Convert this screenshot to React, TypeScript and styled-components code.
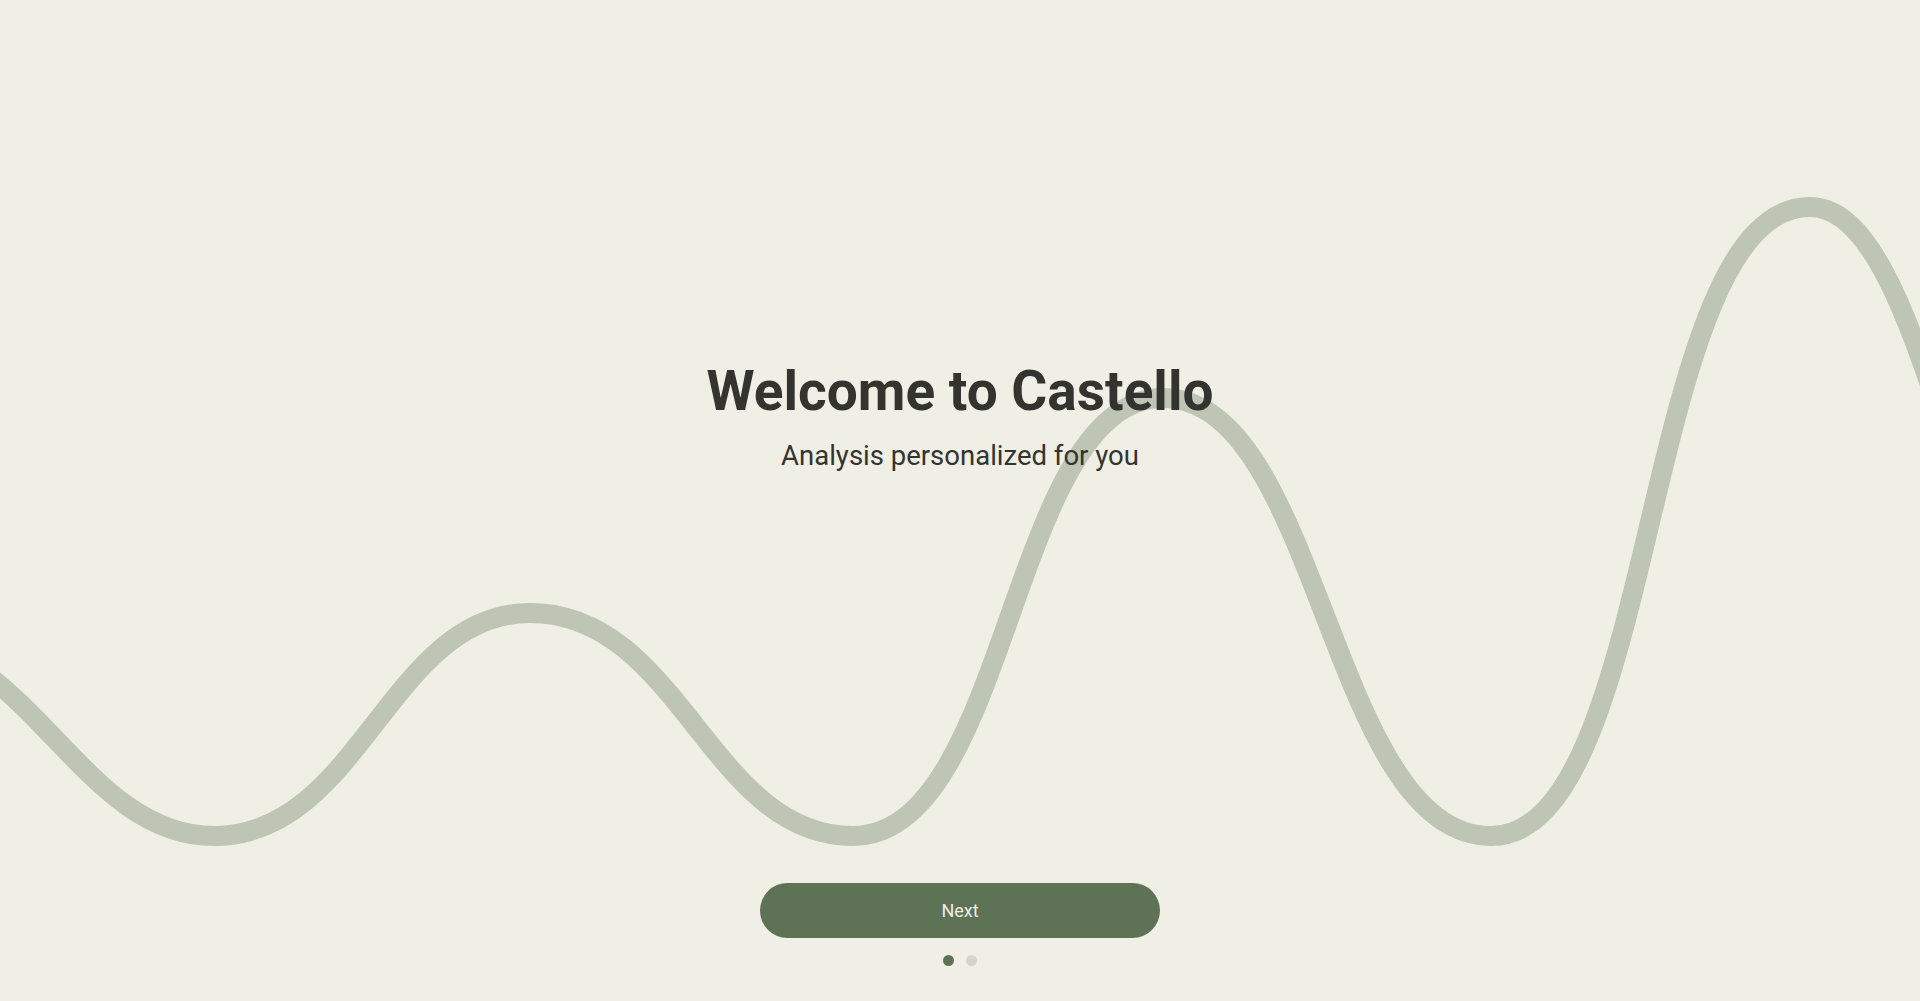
import { useState } from 'react';
import styled, { createGlobalStyle } from 'styled-components';

const slides = [
  { title: 'Welcome to Castello', subtitle: 'Analysis personalized for you' },
  { title: 'Track your progress', subtitle: 'Insights that grow with you' },
];

// centreline of the wave, in page pixels (viewBox matches the 1920x1001 window)
const wavePath = [
  'M -110 640',
  'C 30 640, 80 836, 214 836',
  'C 360 836, 390 613, 530 613',
  'C 680 613, 710 836, 853 836',
  'C 1010 836, 1010 398, 1163 398',
  'C 1320 398, 1330 836, 1491 836',
  'C 1660 836, 1640 207, 1810 207',
  'C 1890 207, 1930 400, 1990 560',
].join(' ');

export default function App() {
  const [step, setStep] = useState(0);
  const slide = slides[step];

  return (
    <>
      <GlobalStyle />
      <Screen>
        <Wave viewBox="0 0 1920 1001" preserveAspectRatio="none" aria-hidden>
          <path d={wavePath} fill="none" stroke="#bec5b4" strokeWidth="20" strokeLinecap="round" />
        </Wave>
        <Hero>
          <Title>{slide.title}</Title>
          <Subtitle>{slide.subtitle}</Subtitle>
        </Hero>
        <Footer>
          <NextButton onClick={() => setStep((s) => (s + 1) % slides.length)}>Next</NextButton>
          <Dots>
            {slides.map((_, i) => (
              <Dot key={i} $active={i === step} />
            ))}
          </Dots>
        </Footer>
      </Screen>
    </>
  );
}

const GlobalStyle = createGlobalStyle`
  html, body {
    margin: 0;
    padding: 0;
    background: #f0efe6;
  }
  body {
    font-family: Roboto, "Liberation Sans", sans-serif;
    overflow: hidden;
  }
`;

const Screen = styled.div`
  position: relative;
  height: 100vh;
  display: flex;
  flex-direction: column;
  align-items: center;
  background: #f0efe6;
  overflow: hidden;
`;

const Wave = styled.svg`
  position: absolute;
  inset: 0;
  width: 100%;
  height: 100%;
  z-index: 0;
`;

const Hero = styled.div`
  position: relative;
  z-index: 1;
  display: flex;
  flex-direction: column;
  align-items: center;
  gap: 14px;
  padding-top: 358px;
`;

const Title = styled.h1`
  margin: 0;
  font-size: 55px;
  line-height: 1.2;
  font-weight: 700;
  color: #333430;
`;

const Subtitle = styled.p`
  margin: 0;
  font-size: 27.5px;
  line-height: 1.3;
  font-weight: 400;
  color: #333430;
`;

const Footer = styled.div`
  position: relative;
  z-index: 1;
  margin-top: auto;
  padding-bottom: 35px;
  display: flex;
  flex-direction: column;
  align-items: center;
  gap: 17px;
`;

const NextButton = styled.button`
  width: 400px;
  height: 55px;
  border: none;
  border-radius: 28px;
  background: #5e7356;
  color: #eeeee2;
  font-family: Roboto, "Liberation Sans", sans-serif;
  font-size: 18px;
  cursor: pointer;
`;

const Dots = styled.div`
  display: flex;
  gap: 12px;
`;

const Dot = styled.span<{ $active: boolean }>`
  width: 11px;
  height: 11px;
  border-radius: 50%;
  background: ${(p) => (p.$active ? '#5e7356' : '#d2d6ca')};
`;
